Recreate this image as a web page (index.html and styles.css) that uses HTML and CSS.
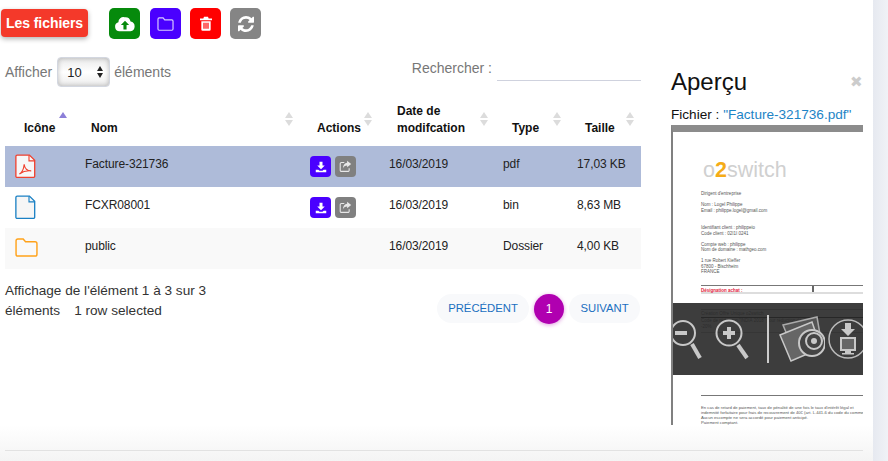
FILE: index.html
```html
<!DOCTYPE html>
<html lang="fr">
<head>
<meta charset="utf-8">
<title>Les fichiers</title>
<link rel="stylesheet" href="styles.css">
</head>
<body>
<div class="page">
  <div class="content">
    <div class="top">
      <main class="main">
        <div class="toolbar">
          <div class="badge">Les fichiers</div>
          <div class="tools">
            <button class="tool green"><svg viewBox="0 0 24 24" width="22" height="22"><path fill="#fff" d="M6 20a5 5 0 0 1-1.200-9.800 5.500 5.500 0 0 1 6.700-5.600 6 6 0 0 1 6.600 4.600A5.500 5.500 0 0 1 18 20z"/><path fill="#068a0c" d="M12 8.500l4.500 4.700h-2.800V18h-3.400v-4.800H7.500z"/></svg></button>
            <button class="tool purple"><svg viewBox="0 0 24 24" width="19" height="19"><path fill="none" stroke="#d8ccff" stroke-width="1.500" d="M2.500 19V6.500A1.500 1.500 0 0 1 4 5h5l2 2.500h9a1.500 1.500 0 0 1 1.500 1.500v10a1.500 1.500 0 0 1-1.500 1.500H4A1.500 1.500 0 0 1 2.500 19z"/></svg></button>
            <button class="tool red"><svg viewBox="0 0 24 24" width="16" height="17"><path fill="#fff" d="M9 2h6l1 2.500h5V7H3V4.500h5zM5 8.500h14V21a2 2 0 0 1-2 2H7a2 2 0 0 1-2-2z"/><path stroke="#f00" stroke-width="1.800" d="M9 11v9M12 11v9M15 11v9"/></svg></button>
            <button class="tool gray"><svg viewBox="0 0 1536 1536" width="16" height="16"><path fill="#fff" d="M1511 928q0 5-1 7-64 268-268 434.500t-478 166.500q-146 0-282.500-55t-243.500-157l-129 129q-19 19-45 19t-45-19-19-45v-448q0-26 19-45t45-19h448q26 0 45 19t19 45-19 45l-137 137q71 66 161 102t187 36q134 0 250-65t186-179q11-17 53-117 8-23 30-23h192q13 0 22.500 9.500t9.500 22.500zm25-800v448q0 26-19 45t-45 19h-448q-26 0-45-19t-19-45 19-45l138-138q-148-137-349-137-134 0-250 65t-186 179q-11 17-53 117-8 23-30 23h-199q-13 0-22.500-9.500t-9.500-22.500v-7q65-268 270-434.500t480-166.500q146 0 284 55.500t245 156.500l130-129q19-19 45-19t45 19 19 45z"/></svg></button>
          </div>
        </div>

        <div class="filters">
          <div class="length">
            <span>Afficher</span>
            <div class="select"><span>10</span><i class="updown"></i></div>
            <span>éléments</span>
          </div>
          <div class="search">
            <span>Rechercher :</span>
            <div class="search-input"></div>
          </div>
        </div>

        <table class="files">
          <colgroup>
            <col class="c1"><col class="c2"><col class="c3"><col class="c4"><col class="c5"><col class="c6">
          </colgroup>
          <thead>
            <tr>
              <th class="h-ico">Icône<i class="sort active"></i></th>
              <th class="h-nom">Nom<i class="sort"></i></th>
              <th class="h-act">Actions<i class="sort"></i></th>
              <th class="h-date">Date de<br>modifcation<i class="sort"></i></th>
              <th class="h-type">Type<i class="sort"></i></th>
              <th class="h-size">Taille<i class="sort"></i></th>
            </tr>
          </thead>
          <tbody>
            <tr class="selected">
              <td class="ic"><svg viewBox="0 0 24 28" width="21" height="25"><path fill="#f7f7f7" stroke="#f0412f" stroke-width="1.500" d="M2.500 1h14l6 6v18a1.500 1.500 0 0 1-1.500 1.500H2.500A1.500 1.500 0 0 1 1 25V2.500A1.500 1.500 0 0 1 2.500 1z"/><path fill="none" stroke="#f0412f" stroke-width="1.300" d="M16 1v6.500h6.500M5 22.500c3-1.500 5-6 5.500-11 .5 5 3.500 7.500 8 7.500-4.500-.5-10 1-13.500 3.500z"/></svg></td>
              <td>Facture-321736</td>
              <td class="cell-acts"><div class="acts"><span class="act dl"><svg viewBox="0 0 16 16" width="12" height="12"><path fill="#fff" d="M6 1h4v5h3L8 11 3 6h3zM1 11.500h3.500L6 13h4l1.500-1.500H15V15H1z"/></svg></span><span class="act sh"><svg viewBox="0 0 16 16" width="13" height="13"><path fill="none" stroke="#e8e8e8" stroke-width="1.300" d="M6.500 3H3a1.500 1.500 0 0 0-1.500 1.500v8A1.500 1.500 0 0 0 3 14h8a1.500 1.500 0 0 0 1.500-1.500V10"/><path fill="#e8e8e8" d="M10 1l5 4-5 4V6.800C7.500 6.800 5.500 8 4.800 10.500 4.800 6.500 7 3.800 10 3.400z"/></svg></span></div></td>
              <td>16/03/2019</td>
              <td>pdf</td>
              <td>17,03 KB</td>
            </tr>
            <tr>
              <td class="ic"><svg viewBox="0 0 24 28" width="21" height="25"><path fill="#f6f6f6" stroke="#1a80c4" stroke-width="1.500" d="M2.500 1h14l6 6v18a1.500 1.500 0 0 1-1.500 1.500H2.500A1.500 1.500 0 0 1 1 25V2.500A1.500 1.500 0 0 1 2.500 1z"/><path fill="none" stroke="#1a80c4" stroke-width="1.300" d="M16 1v6.500h6.500"/></svg></td>
              <td>FCXR08001</td>
              <td class="cell-acts"><div class="acts"><span class="act dl"><svg viewBox="0 0 16 16" width="12" height="12"><path fill="#fff" d="M6 1h4v5h3L8 11 3 6h3zM1 11.500h3.500L6 13h4l1.500-1.500H15V15H1z"/></svg></span><span class="act sh"><svg viewBox="0 0 16 16" width="13" height="13"><path fill="none" stroke="#e8e8e8" stroke-width="1.300" d="M6.500 3H3a1.500 1.500 0 0 0-1.500 1.500v8A1.500 1.500 0 0 0 3 14h8a1.500 1.500 0 0 0 1.500-1.500V10"/><path fill="#e8e8e8" d="M10 1l5 4-5 4V6.800C7.500 6.800 5.500 8 4.800 10.500 4.800 6.500 7 3.800 10 3.400z"/></svg></span></div></td>
              <td>16/03/2019</td>
              <td>bin</td>
              <td>8,63 MB</td>
            </tr>
            <tr class="odd">
              <td class="ic folder"><svg viewBox="0 0 24 20" width="23" height="19"><path fill="none" stroke="#ffa21a" stroke-width="1.500" d="M1 17V3a2 2 0 0 1 2-2h5.500l2.500 3h10a2 2 0 0 1 2 2v11a2 2 0 0 1-2 2H3a2 2 0 0 1-2-2z"/></svg></td>
              <td>public</td>
              <td></td>
              <td>16/03/2019</td>
              <td>Dossier</td>
              <td>4,00 KB</td>
            </tr>
          </tbody>
        </table>

        <div class="table-foot">
          <div class="info">
            <div>Affichage de l'élément 1 à 3 sur 3</div>
            <div class="info-second"><span>éléments</span><span>1 row selected</span></div>
          </div>
          <nav class="pager">
            <span class="pill prev">PRÉCÉDENT</span>
            <span class="current">1</span>
            <span class="pill next">SUIVANT</span>
          </nav>
        </div>
      </main>

      <aside class="preview">
        <div class="preview-head">
          <h2>Aperçu</h2>
          <span class="close">✖</span>
        </div>
        <div class="file-line">Fichier : <a>"Facture-321736.pdf"</a></div>
        <div class="viewer">
          <div class="doc">
            <div class="logo"><span class="o">o</span><b>2</b><span class="s">switch</span></div>
            <p class="gap1">Dirigent d'entreprise</p>
            <p class="gap2">Nom : Logel Philippe<br>Email : philippe.logel@gmail.com</p>
            <p class="gap3">Identifiant client : philippeio<br>Code client : 02I1I 0241</p>
            <p class="gap2">Compte web : philippe<br>Nom de domaine : mathgeo.com</p>
            <p class="gap2">1 rue Robert Kieffer<br>67800 - Bischheim<br>FRANCE</p>
            <div class="invoice">
              <div class="inv-head"><span class="inv-a">Désignation achat :</span><span class="inv-b"></span></div>
              <div class="inv-empty"></div>
              <div class="inv-row">Création Offre Unique o2switch</div>
              <div class="inv-row tall">Code de réduction "INDIA 2018" pour réduction de<br>-20%</div>
            </div>
            <div class="terms">En cas de retard de paiement, taux de pénalité de une fois le taux d'intérêt légal et<br>indemnité forfaitaire pour frais de recouvrement de 40€ (art. L.441-6 du code du commerce).<br>Aucun escompte ne sera accordé pour paiement anticipé.<br>Paiement comptant.</div>
          </div>
          <div class="overlay">
            <svg class="ov-ic zoom-out" viewBox="0 0 32 52" width="32" height="52"><circle cx="12" cy="20" r="12" fill="none" stroke="#c8c8c8" stroke-width="2"/><path stroke="#c8c8c8" stroke-width="4" d="M4 20h12"/><path stroke="#c8c8c8" stroke-width="4" d="M21 31l8 14"/></svg>
            <svg class="ov-ic zoom-in" viewBox="0 0 36 52" width="36" height="52"><circle cx="15" cy="20" r="12.500" fill="none" stroke="#c8c8c8" stroke-width="2"/><path stroke="#c8c8c8" stroke-width="4" d="M9 20h12M15 14v12"/><path stroke="#c8c8c8" stroke-width="4" d="M24 32l9 13"/></svg>
            <i class="ov-sep"></i>
            <svg class="ov-ic photos" viewBox="0 0 46 52" width="46" height="52"><path fill="#555" stroke="#aaa" stroke-width="1.500" d="M4 12L38 4l4 23-26 14z"/><path fill="#666" stroke="#c8c8c8" stroke-width="1.500" d="M1 22l32-13 9 26-30 13z"/><circle cx="33" cy="30" r="13" fill="#444" stroke="#c8c8c8" stroke-width="2"/><circle cx="35" cy="28" r="8" fill="none" stroke="#c8c8c8" stroke-width="2"/><circle cx="35" cy="28" r="3" fill="#c8c8c8"/></svg>
            <svg class="ov-ic monitor" viewBox="0 0 42 52" width="42" height="52"><circle cx="23" cy="26" r="19" fill="none" stroke="#bbb" stroke-width="1.500"/><path fill="#c8c8c8" d="M20 10h6v6h4l-7 7-7-7h4z"/><rect x="16" y="25" width="14" height="12" fill="#666" stroke="#c8c8c8" stroke-width="2"/><path fill="#c8c8c8" d="M20 38h6v2h3v1.500H17V40h3z"/></svg>
          </div>
        </div>
      </aside>
    </div>
    <footer class="foot"><div class="foot-line"></div></footer>
  </div>
  <div class="strip"></div>
</div>
</body>
</html>
```

FILE: styles.css
```css
* { box-sizing: border-box; }
html, body { margin: 0; height: 100%; }
body {
  width: 888px;
  height: 461px;
  overflow: hidden;
  background: #fff;
  font-family: "Liberation Sans", Arial, sans-serif;
  font-size: 13px;
  color: #222;
}
.page { display: flex; height: 461px; }
.content { width: 873px; display: flex; flex-direction: column; }
.strip { flex: 1; background: linear-gradient(90deg, #e6e9f0, #f0f2f6); }
.top { display: flex; height: 425px; overflow: hidden; }
.main { width: 641px; flex: none; padding: 8px 0 0 0; }

.toolbar { display: flex; align-items: flex-start; padding-left: 1px; }
.badge {
  width: 87px; height: 28px; margin-top: 1px;
  background: #f4392a; color: #fff; font-weight: 700; font-size: 14px; letter-spacing: -.05px;
  line-height: 28px; text-align: center; border-radius: 4px;
  box-shadow: 0 2px 5px rgba(0,0,0,.3);
}
.tools { display: flex; gap: 9px; margin-left: 21px; }
.tool {
  width: 31px; height: 31px; border: 0; padding: 0; border-radius: 5px;
  display: flex; align-items: center; justify-content: center;
}
.green { background: #068a0c; margin-right: 1px; }
.purple { background: #4a00ff; }
.red { background: #f00; }
.gray { background: #858585; }

.filters { display: flex; justify-content: space-between; height: 40px; margin-top: 18px; padding-left: 5px; }
.length { display: flex; align-items: center; height: 30px; gap: 4px; color: #777; font-size: 14px; }
.select {
  width: 53px; height: 30px; margin-left: 1px; display: flex; align-items: center; justify-content: space-between;
  padding: 0 5px 0 9px; color: #222; font-size: 13px; border-radius: 4px;
  border: 1px solid #d3d7e0;
  background: linear-gradient(#e9e9e9, #fff 50%, #ececec);
  box-shadow: inset 0 0 5px rgba(0,0,0,.25);
}
.updown { width: 7px; height: 12px; display: block; position: relative; }
.updown::before, .updown::after {
  content: ""; position: absolute; left: 0;
  border-left: 3.5px solid transparent; border-right: 3.5px solid transparent;
}
.updown::before { top: 0; border-bottom: 5px solid #222; }
.updown::after { bottom: 0; border-top: 5px solid #222; }
.search { display: flex; align-items: flex-start; color: #777; font-size: 14px; }
.search > span { margin-top: 3px; }
.search-input { width: 144px; height: 24px; margin-left: 5px; border-bottom: 1px solid #cfd2de; }

.files { width: 636px; margin-left: 5px; border-collapse: collapse; table-layout: fixed; color: #222; }
.c1 { width: 70px; } .c2 { width: 225px; } .c3 { width: 79px; }
.c4 { width: 114px; } .c5 { width: 74px; } .c6 { width: 74px; }
.files th {
  position: relative; height: 49px; padding: 0 0 9px 18px; text-align: left; vertical-align: bottom;
  font-size: 12px; line-height: 17px; color: #111; font-weight: 700;
}
.files th.h-ico, .files th.h-type { padding-left: 19px; }
.files th.h-nom { padding-left: 16px; }
.files th.h-act { padding-left: 17px; }
.sort { position: absolute; right: 6px; top: 15px; width: 9px; height: 14px; display: block; }
.sort::before, .sort::after {
  content: ""; position: absolute; left: 0;
  border-left: 4.5px solid transparent; border-right: 4.5px solid transparent;
}
.sort::before { top: 0; border-bottom: 6px solid #dcdcdc; }
.sort::after { bottom: 0; border-top: 6px solid #dcdcdc; }
.h-date .sort { right: 4px; }
.h-type .sort { right: 5px; }
.sort.active { right: 7px; }
.sort.active::before { border-bottom-color: #8c7fd8; }
.sort.active::after { display: none; }
.files td { height: 41px; padding: 10px 0 0 10px; vertical-align: top; font-size: 12px; letter-spacing: -.1px; line-height: 17px; }
.files td.ic { padding-top: 8px; }
.files td.folder { padding-top: 10px; }
.files td.cell-acts { padding-top: 10px; }
.selected td { background: #aebbd9; }
.odd td { background: #f9f9f9; }
.acts { display: flex; gap: 4px; }
.act { width: 21px; height: 21px; border-radius: 4px; display: flex; align-items: center; justify-content: center; }
.dl { background: #4a00ff; }
.sh { background: #808080; }

.table-foot { display: flex; justify-content: space-between; padding: 12px 1px 0 5px; }
.info { width: 212px; line-height: 20px; font-size: 13.6px; color: #333; }
.info-second { display: flex; gap: 14px; }
.pager { display: flex; align-items: flex-start; gap: 5px; margin-top: 13px; }
.pill { height: 29px; line-height: 29px; text-align: center; background: #f8f9fb; border-radius: 15px; color: #1a6fc0; font-size: 11.3px; }
.prev { width: 92px; }
.next { width: 71px; }
.current {
  width: 30px; height: 30px; border-radius: 50%; background: #b000b0; color: #fff; text-align: center;
  line-height: 30px; font-size: 12px; box-shadow: 0 1px 4px rgba(176,0,176,.4);
}

.preview { width: 192px; margin-left: 30px; flex: none; display: flex; flex-direction: column; }
.preview-head { display: flex; justify-content: space-between; padding-top: 67px; height: 96px; align-items: center; }
.preview-head h2 { margin: 0; font-size: 24px; font-weight: 400; color: #111; }
.close { color: #ccc; font-size: 15px; }
.file-line { height: 19px; margin-top: 10px; line-height: 18px; font-size: 13.6px; color: #111; white-space: nowrap; }
.file-line a { color: #1d84c6; }
.viewer { position: relative; flex: 1; overflow: hidden; border-top: 7px solid #8c8c8c; border-left: 2px solid #808080; }
.doc { width: 340px; padding: 26px 0 0 28px; font-size: 4.5px; line-height: 5.5px; color: #555; }
.doc p { margin: 0; white-space: nowrap; }
.logo { font-size: 21.5px; line-height: 24px; height: 24px; color: #d0d0d0; margin-left: 2px; }
.logo b { color: #f5ac17; }
.doc .gap1 { margin-top: 9px; }
.doc .gap2 { margin-top: 5.5px; }
.doc .gap3 { margin-top: 12px; }
.invoice { margin-top: 10px; width: 300px; border-top: 1px solid #777; border-bottom: 1px solid #777; height: 111px; }
.inv-head { display: flex; height: 8px; line-height: 9px; border-bottom: 2px solid #ddd; }
.inv-a { width: 113px; color: #e0203a; font-weight: 700; border-right: 2px solid #666; }
.inv-empty { height: 16px; border-bottom: 1px solid #999; }
.inv-row { height: 8px; line-height: 8px; border-bottom: 1px solid #222; }
.inv-row.tall { height: 15px; line-height: 6px; border-bottom: 1px solid #bbb; }
.terms { padding-top: 9px; font-size: 4.2px; line-height: 5px; white-space: nowrap; }
.overlay {
  position: absolute; left: -2px; top: 171px; width: 192px; height: 72px;
  background: rgba(40,40,40,.9); display: flex; align-items: center;
}
.ov-ic { flex: none; display: block; }
.zoom-in { margin-left: 11px; }
.ov-sep { width: 2px; height: 48px; background: #ccc; margin-left: 17px; flex: none; }
.photos { margin-left: 10px; }

.foot { flex: 1; background: linear-gradient(#fff, #f4f4f4); padding-top: 25px; }
.foot-line { height: 1px; margin-left: 5px; margin-right: 10px; background: #e2e2e2; }
```
